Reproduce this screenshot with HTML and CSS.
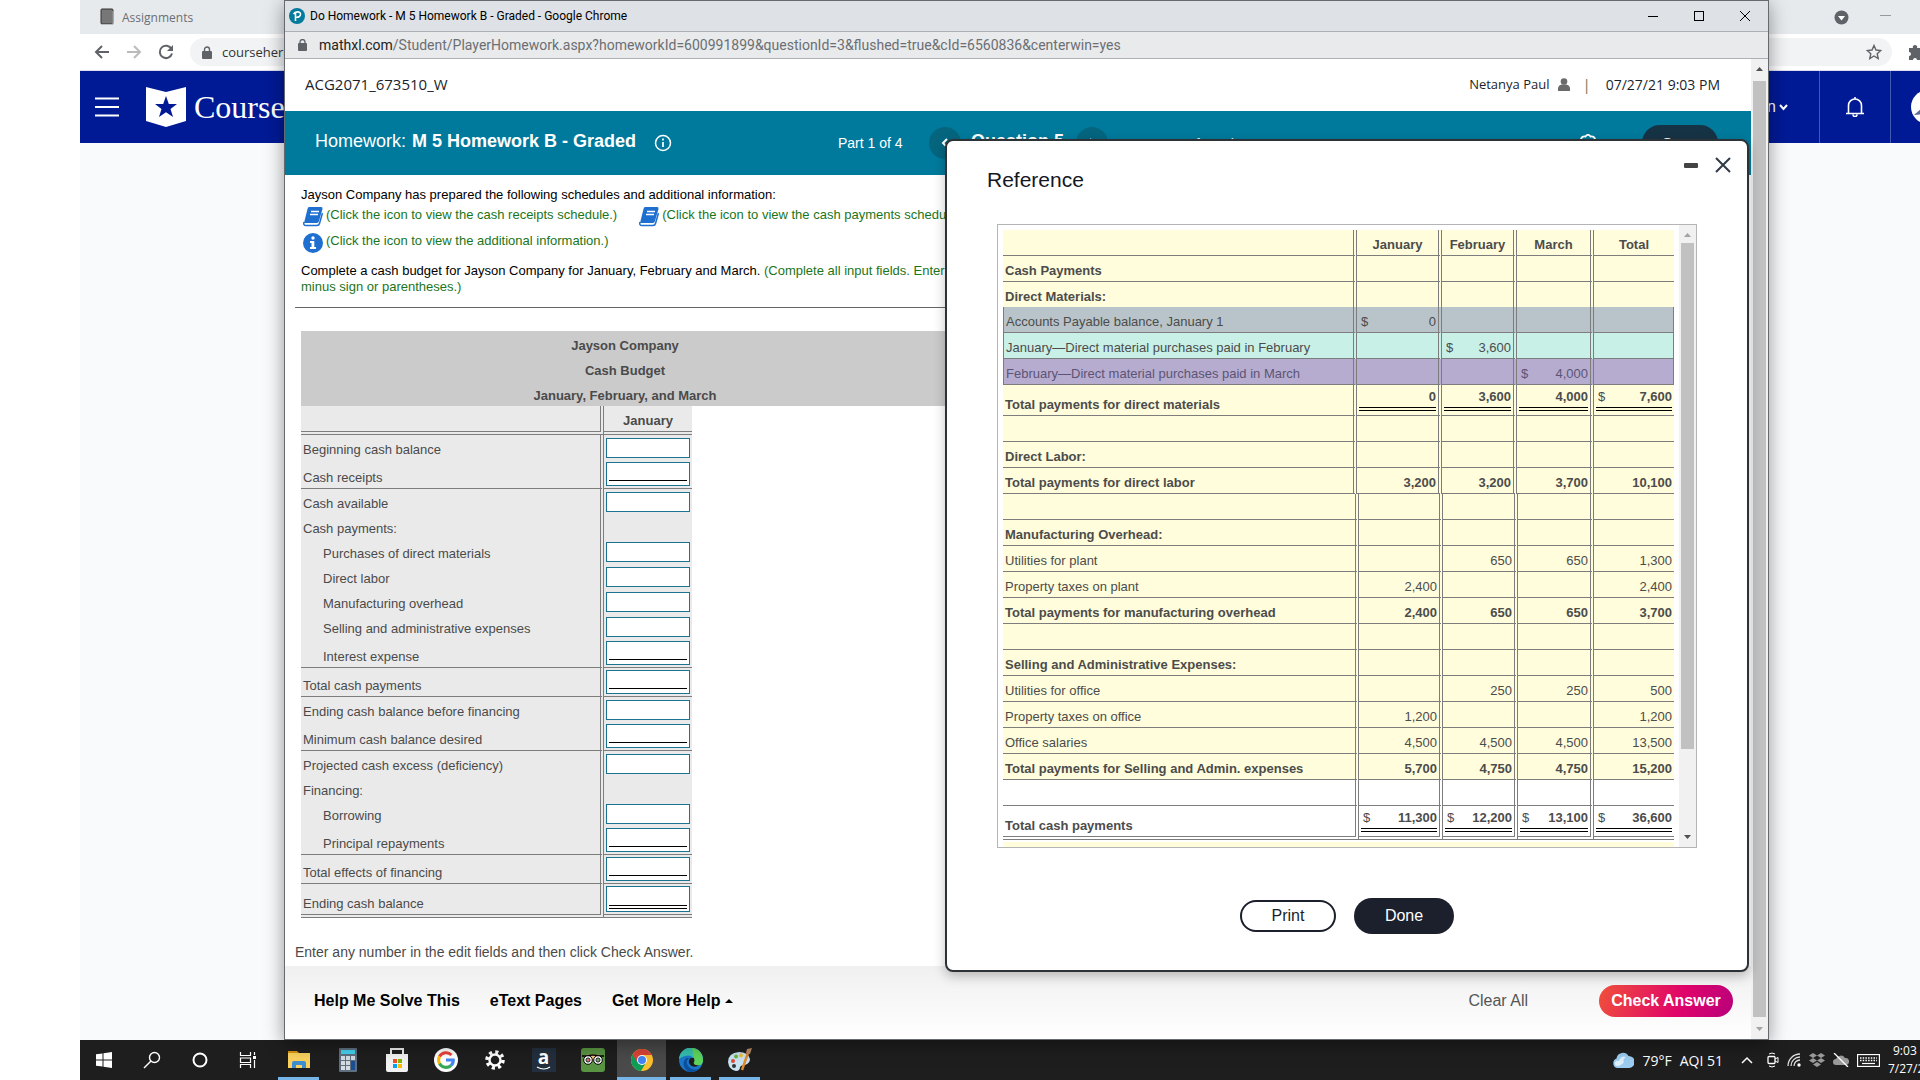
FILE: index.html
```html
<!DOCTYPE html>
<html lang="en">
<head>
  <meta charset="UTF-8">
  <meta name="viewport" content="width=device-width, initial-scale=1.0">
  <title>Do Homework - M 5 Homework B - Graded</title>
  <link rel="stylesheet" href="styles.css">
</head>
<body>

  <div class="desktop">

    <!-- Browser in the background -->
    <div class="browser">
      <div class="tab-strip">
        <svg class="tab-icon" width="14" height="18" viewBox="0 0 14 18"><rect x="1" y="1" width="12" height="15" rx="1" fill="#777" stroke="#333"/><path d="M2 16.500h11V3" stroke="#bbb" fill="none"/></svg>
        <span class="tab-title">Assignments</span>
        <svg class="tab-account" width="15" height="15" viewBox="0 0 15 15"><circle cx="7.500" cy="7.500" r="7" fill="#5f6368"/><path d="M4 6h7l-3.500 4.500z" fill="#fff"/></svg>
        <svg class="tab-minimize" width="11" height="11" viewBox="0 0 11 11"><path d="M0 3.500h11" stroke="#999"/></svg>
      </div>
      <div class="toolbar">
        <svg width="16" height="16" viewBox="0 0 16 16"><path d="M15 8H2M8 2L2 8l6 6" fill="none" stroke="#5f6368" stroke-width="2"/></svg>
        <svg width="16" height="16" viewBox="0 0 16 16"><path d="M1 8h13M8 2l6 6-6 6" fill="none" stroke="#bbb" stroke-width="2"/></svg>
        <svg width="16" height="16" viewBox="0 0 16 16"><path d="M13.500 5A6.200 6.200 0 1 0 14 9.500" fill="none" stroke="#5f6368" stroke-width="2"/><path d="M15 1v6H9z" fill="#5f6368"/></svg>
        <div class="omnibox">
          <svg width="10" height="13" viewBox="0 0 10 13"><rect y="5" width="10" height="8" rx="1" fill="#5f6368"/><path d="M2.500 5V3.500a2.500 2.500 0 0 1 5 0V5" fill="none" stroke="#5f6368" stroke-width="1.400"/></svg>
          <span>coursehero.com</span>
          <svg class="star" width="16" height="16" viewBox="0 0 16 16"><path d="M8 1.500l2 4.500 4.800.5-3.600 3.200 1 4.800L8 12l-4.200 2.500 1-4.800L1.200 6.500 6 6z" fill="none" stroke="#5f6368" stroke-width="1.400"/></svg>
        </div>
        <svg class="puzzle" width="16" height="16" viewBox="0 0 16 16"><path d="M1 4h4a2.200 2.200 0 1 1 4 0h4v4a2 2 0 1 1 0 4v4H9a2 2 0 0 0-4 0H1v-4a2 2 0 0 0 0-4z" fill="#5f6368"/></svg>
      </div>
      <div class="site-header">
        <svg class="menu" width="24" height="20" viewBox="0 0 24 20"><path d="M0 1.500h24M0 10h24M0 18.500h24" stroke="#fff" stroke-width="2"/></svg>
        <svg width="40" height="40" viewBox="0 0 40 40"><path d="M0 0l20 5L40 0v34l-20 6-20-6z" fill="#fff"/><path d="M20 9l2.800 8h8.200l-6.500 5 2.500 8-7-4.800L13 30l2.500-8L9 17h8.200z" fill="#001a96"/></svg>
        <span class="site-name">Course Hero</span>
        <div class="site-menu">
          <span>n</span>
          <svg width="9" height="7" viewBox="0 0 9 7"><path d="M1 1l3.500 4L8 1" fill="none" stroke="#fff" stroke-width="2"/></svg>
        </div>
        <div class="site-bell">
          <svg width="20" height="20" viewBox="0 0 20 20"><path d="M1 16.500h18M3.500 16V8.500a6.500 6.500 0 0 1 13 0V16M8 17.500a2 2 0 0 0 4 0M10 2V0" fill="none" stroke="#fff" stroke-width="1.600"/></svg>
        </div>
        <div class="site-user">
          <svg width="36" height="36" viewBox="0 0 36 36"><circle cx="18" cy="18" r="17" fill="#fff"/><path d="M4 26l8-7 6 6z" fill="#5a6a9a"/></svg>
        </div>
      </div>
    </div>

    <!-- Homework window -->
    <div class="window">
      <div class="title-bar">
        <svg width="16" height="16" viewBox="0 0 16 16"><circle cx="8" cy="8" r="8" fill="#047a9c"/><path d="M6.500 13V5M4.500 6.200C6 3.200 11.500 3 11.500 6.200c0 2.400-2.500 3.300-4 2.800" fill="none" stroke="#fff" stroke-width="1.600"/></svg>
        <span>Do Homework - M 5 Homework B - Graded - Google Chrome</span>
        <svg class="win-buttons" width="104" height="12" viewBox="0 0 104 12"><path d="M1 6.500h10" stroke="#000"/><rect x="47.500" y="1.500" width="9" height="9" fill="none" stroke="#000"/><path d="M93 1l10 10M103 1L93 11" stroke="#000"/></svg>
      </div>
      <div class="url-bar">
        <svg width="9" height="12" viewBox="0 0 9 12"><rect y="4" width="9" height="8" rx="1" fill="#5f6368"/><path d="M2 5V3a2.500 2.500 0 0 1 5 0v2" fill="none" stroke="#5f6368" stroke-width="1.300"/></svg>
        <span><b>mathxl.com</b>/Student/PlayerHomework.aspx?homeworkId=600991899&amp;questionId=3&amp;flushed=true&amp;cId=6560836&amp;centerwin=yes</span>
      </div>

      <div class="window-body">
        <div class="page">
          <div class="course-bar">
            <span class="course-id">ACG2071_673510_W</span>
            <span class="user-name">Netanya Paul</span>
            <svg width="12" height="13" viewBox="0 0 12 13"><circle cx="6" cy="3.500" r="3.300" fill="#6a6a6a"/><path d="M0 13V9.500Q1 7 3.500 6.500h5Q11 7 12 9.500V13z" fill="#6a6a6a"/></svg>
            <span class="bar">|</span>
            <span class="course-date">07/27/21 9:03 PM</span>
          </div>

          <div class="homework-bar">
            <h1>Homework: <b>M 5 Homework B - Graded</b>
              <svg width="18" height="18" viewBox="0 0 18 18"><circle cx="9" cy="9" r="7.500" fill="none" stroke="#fff" stroke-width="1.500"/><path d="M9 8v5M9 4.500v2" stroke="#fff" stroke-width="1.700"/></svg>
            </h1>
            <span class="part">Part 1 of 4</span>
            <button class="round" type="button" aria-label="Previous question"><svg width="8" height="12" viewBox="0 0 8 12"><path d="M6 2L2 6l4 4" fill="none" stroke="#fff" stroke-width="2"/></svg></button>
            <span class="question">Question 5</span>
            <button class="round" type="button" aria-label="Next question"><svg width="8" height="12" viewBox="0 0 8 12"><path d="M2 2l4 4-4 4" fill="none" stroke="#fff" stroke-width="2"/></svg></button>
            <span class="score">Score: 0 of 2 points</span>
            <svg class="gear" width="18" height="18" viewBox="0 0 18 18"><path d="M6.500 2.500Q9-1 11.500 2.500q3.500-.5 4.500 2.500-1 2 1 4-2 2-1 4-1 3-4.500 2.500Q9 19 6.500 15.500 3 16 2 13q1-2-1-4 2-2 1-4 1-3 4.500-2.500z" fill="none" stroke="#fff" stroke-width="1.800"/></svg>
            <button class="save" type="button">Save</button>
          </div>

          <div class="problem">
            <p>Jayson Company has prepared the following schedules and additional information:</p>
            <div class="links">
              <a href="#receipts"><svg width="20" height="20" viewBox="0 0 20 20"><path d="M6 0h12q2 0 1.500 2L16 14q-.5 2-2 2H1L4.500 2Q5 0 6 0z" fill="#1f6fd0"/><path d="M1 15q-1 3.500 2 3.500h11q2 0 2.500-2L19.500 6" fill="none" stroke="#1f6fd0" stroke-width="1.500"/><path d="M8 4.500h8M7 7.500h8" stroke="#fff" stroke-width="1.300"/></svg>(Click the icon to view the cash receipts schedule.)</a>
              <a href="#payments"><svg width="20" height="20" viewBox="0 0 20 20"><path d="M6 0h12q2 0 1.500 2L16 14q-.5 2-2 2H1L4.500 2Q5 0 6 0z" fill="#1f6fd0"/><path d="M1 15q-1 3.500 2 3.500h11q2 0 2.500-2L19.500 6" fill="none" stroke="#1f6fd0" stroke-width="1.500"/><path d="M8 4.500h8M7 7.500h8" stroke="#fff" stroke-width="1.300"/></svg>(Click the icon to view the cash payments schedule.)</a>
            </div>
            <div class="links info">
              <a href="#additional"><svg width="20" height="20" viewBox="0 0 20 20"><circle cx="10" cy="10" r="10" fill="#1f6fd0"/><circle cx="10" cy="5" r="1.700" fill="#fff"/><path d="M7 8h4.300v6H13v2H7v-2h1.500v-4H7z" fill="#fff"/></svg>(Click the icon to view the additional information.)</a>
            </div>
            <p class="task">Complete a cash budget for Jayson Company for January, February and March. <em>(Complete all input fields. Enter a<br>minus sign or parentheses.)</em></p>
          </div>

          <div class="answer">
            <table class="budget">
              <colgroup><col class="c-label"><col class="c-month"><col></colgroup>
              <thead>
                <tr class="heading"><th colspan="3">Jayson Company</th></tr>
                <tr class="heading"><th colspan="3">Cash Budget</th></tr>
                <tr class="heading"><th colspan="3">January, February, and March</th></tr>
                <tr class="months"><th></th><th>January</th></tr>
              </thead>
              <tbody>
                <tr><td><label for="b1">Beginning cash balance</label></td><td><div class="field"><input id="b1" type="text"></div></td></tr>
                <tr class="sum"><td><label for="b2">Cash receipts</label></td><td><div class="field"><input id="b2" type="text"></div></td></tr>
                <tr><td><label for="b3">Cash available</label></td><td><div class="field"><input id="b3" type="text"></div></td></tr>
                <tr><td>Cash payments:</td><td></td></tr>
                <tr class="sub"><td><label for="b4">Purchases of direct materials</label></td><td><div class="field"><input id="b4" type="text"></div></td></tr>
                <tr class="sub"><td><label for="b5">Direct labor</label></td><td><div class="field"><input id="b5" type="text"></div></td></tr>
                <tr class="sub"><td><label for="b6">Manufacturing overhead</label></td><td><div class="field"><input id="b6" type="text"></div></td></tr>
                <tr class="sub"><td><label for="b7">Selling and administrative expenses</label></td><td><div class="field"><input id="b7" type="text"></div></td></tr>
                <tr class="sub sum"><td><label for="b8">Interest expense</label></td><td><div class="field"><input id="b8" type="text"></div></td></tr>
                <tr class="sum"><td><label for="b9">Total cash payments</label></td><td><div class="field"><input id="b9" type="text"></div></td></tr>
                <tr><td><label for="b10">Ending cash balance before financing</label></td><td><div class="field"><input id="b10" type="text"></div></td></tr>
                <tr class="sum"><td><label for="b11">Minimum cash balance desired</label></td><td><div class="field"><input id="b11" type="text"></div></td></tr>
                <tr><td><label for="b12">Projected cash excess (deficiency)</label></td><td><div class="field"><input id="b12" type="text"></div></td></tr>
                <tr><td>Financing:</td><td></td></tr>
                <tr class="sub"><td><label for="b13">Borrowing</label></td><td><div class="field"><input id="b13" type="text"></div></td></tr>
                <tr class="sub sum"><td><label for="b14">Principal repayments</label></td><td><div class="field"><input id="b14" type="text"></div></td></tr>
                <tr class="sum"><td><label for="b15">Total effects of financing</label></td><td><div class="field"><input id="b15" type="text"></div></td></tr>
                <tr class="final"><td><label for="b16">Ending cash balance</label></td><td><div class="field"><input id="b16" type="text"></div></td></tr>
              </tbody>
            </table>
          </div>

          <p class="hint">Enter any number in the edit fields and then click Check Answer.</p>

          <div class="page-footer">
            <a href="#solve">Help Me Solve This</a>
            <a href="#etext">eText Pages</a>
            <a href="#help">Get More Help <svg width="8" height="5" viewBox="0 0 8 5"><path d="M0 5l4-4 4 4z"/></svg></a>
            <button class="clear" type="button">Clear All</button>
            <button class="check" type="button">Check Answer</button>
          </div>
        </div>

        <div class="scrollbar">
          <svg width="9" height="6" viewBox="0 0 9 6"><path d="M1 5l3.500-4L8 5z" fill="#505050"/></svg>
          <div class="thumb"></div>
          <svg width="9" height="6" viewBox="0 0 9 6"><path d="M1 1l3.500 4L8 1z" fill="#a3a3a3"/></svg>
        </div>
      </div>

      <!-- Reference dialog -->
      <div class="dialog" role="dialog" aria-labelledby="ref-title">
        <div class="dialog-head">
          <h2 id="ref-title">Reference</h2>
          <button class="icon-btn" type="button" aria-label="Minimize"><svg width="16" height="16" viewBox="0 0 16 16"><rect x="1" y="6" width="14" height="5" rx="1" fill="#444"/></svg></button>
          <button class="icon-btn" type="button" aria-label="Close"><svg width="16" height="16" viewBox="0 0 16 16"><path d="M1 1l14 14M15 1L1 15" stroke="#2f3a47" stroke-width="2"/></svg></button>
        </div>

        <div class="ref-box">
          <div class="ref-content">
            <table class="ref ref-top">
              <colgroup><col class="r1"><col class="r2"><col class="r3"><col class="r4"><col class="r5"></colgroup>
              <thead>
                <tr><th></th><th>January</th><th>February</th><th>March</th><th>Total</th></tr>
              </thead>
              <tbody>
                <tr class="total"><td>Cash Payments</td><td></td><td></td><td></td><td></td></tr>
                <tr class="total open"><td>Direct Materials:</td><td></td><td></td><td></td><td></td></tr>
                <tr class="mark grey"><td>Accounts Payable balance, January 1</td><td><div class="money"><i>$</i>0</div></td><td></td><td></td><td></td></tr>
                <tr class="mark mint"><td>January—Direct material purchases paid in February</td><td></td><td><div class="money"><i>$</i>3,600</div></td><td></td><td></td></tr>
                <tr class="mark violet"><td>February—Direct material purchases paid in March</td><td></td><td></td><td><div class="money"><i>$</i>4,000</div></td><td></td></tr>
                <tr class="total"><td>Total payments for direct materials</td><td><div class="money ruled">0</div></td><td><div class="money ruled">3,600</div></td><td><div class="money ruled">4,000</div></td><td><div class="money ruled"><i>$</i>7,600</div></td></tr>
                <tr><td></td><td></td><td></td><td></td><td></td></tr>
                <tr class="total"><td>Direct Labor:</td><td></td><td></td><td></td><td></td></tr>
                <tr class="total"><td>Total payments for direct labor</td><td>3,200</td><td>3,200</td><td>3,700</td><td>10,100</td></tr>
              </tbody>
            </table>
            <table class="ref ref-bottom">
              <colgroup><col class="r1"><col class="r2"><col class="r3"><col class="r4"><col class="r5"></colgroup>
              <tbody>
                <tr><td></td><td></td><td></td><td></td><td></td></tr>
                <tr class="total"><td>Manufacturing Overhead:</td><td></td><td></td><td></td><td></td></tr>
                <tr><td>Utilities for plant</td><td></td><td>650</td><td>650</td><td>1,300</td></tr>
                <tr><td>Property taxes on plant</td><td>2,400</td><td></td><td></td><td>2,400</td></tr>
                <tr class="total"><td>Total payments for manufacturing overhead</td><td>2,400</td><td>650</td><td>650</td><td>3,700</td></tr>
                <tr><td></td><td></td><td></td><td></td><td></td></tr>
                <tr class="total"><td>Selling and Administrative Expenses:</td><td></td><td></td><td></td><td></td></tr>
                <tr><td>Utilities for office</td><td></td><td>250</td><td>250</td><td>500</td></tr>
                <tr><td>Property taxes on office</td><td>1,200</td><td></td><td></td><td>1,200</td></tr>
                <tr><td>Office salaries</td><td>4,500</td><td>4,500</td><td>4,500</td><td>13,500</td></tr>
                <tr class="total"><td>Total payments for Selling and Admin. expenses</td><td>5,700</td><td>4,750</td><td>4,750</td><td>15,200</td></tr>
                <tr class="plain"><td></td><td></td><td></td><td></td><td></td></tr>
                <tr class="plain total grand"><td>Total cash payments</td><td><div class="money ruled"><i>$</i>11,300</div></td><td><div class="money ruled"><i>$</i>12,200</div></td><td><div class="money ruled"><i>$</i>13,100</div></td><td><div class="money ruled"><i>$</i>36,600</div></td></tr>
              </tbody>
            </table>
            <div class="ref-next"></div>
          </div>
          <div class="scrollbar">
            <svg width="9" height="6" viewBox="0 0 9 6"><path d="M1 5l3.500-4L8 5z" fill="#a3a3a3"/></svg>
            <div class="thumb"></div>
            <svg width="9" height="6" viewBox="0 0 9 6"><path d="M1 1l3.500 4L8 1z" fill="#505050"/></svg>
          </div>
        </div>

        <div class="dialog-buttons">
          <button class="print" type="button">Print</button>
          <button class="done" type="button">Done</button>
        </div>
      </div>
    </div>
  </div>

  <!-- Taskbar -->
  <div class="taskbar">
    <div class="task-item"><svg width="16" height="16" viewBox="0 0 16 16"><path d="M0 2.300l6.500-.9v6.100H0zM7.500 1.200L16 0v7.500H7.500zM0 8.500h6.500v6.100L0 13.700zM7.500 8.500H16V16l-8.500-1.200z" fill="#fff"/></svg></div>
    <div class="task-item"><svg width="18" height="18" viewBox="0 0 18 18"><circle cx="11.500" cy="6.500" r="5" fill="none" stroke="#fff" stroke-width="1.400"/><path d="M8 10l-7 7" stroke="#fff" stroke-width="1.500"/></svg></div>
    <div class="task-item"><svg width="18" height="18" viewBox="0 0 18 18"><circle cx="9" cy="9" r="6.500" fill="none" stroke="#fff" stroke-width="2"/></svg></div>
    <div class="task-item"><svg width="18" height="18" viewBox="0 0 18 18"><path d="M1.500 1v3.500h10V1M1.500 17v-3.500h10V17M1.500 7h10v4.500h-10zM15.500 1v3M15.500 9v8" fill="none" stroke="#fff" stroke-width="1.200"/><path d="M14 5h3v3h-3z" fill="#fff"/></svg></div>
    <div class="task-apps">
      <div class="task-item app open"><svg width="24" height="24" viewBox="0 0 24 24"><path d="M1 3h9l2 2v3H1z" fill="#d9940f"/><path d="M1 5h22v15H1z" fill="#fbd25f"/><path d="M5 20v-5q0-2 2-2h10q2 0 2 2v5h-4v-3H9v3z" fill="#3f8fd0"/></svg></div>
      <div class="task-item app"><svg width="18" height="24" viewBox="0 0 18 24"><rect width="18" height="24" rx="1" fill="#5d6f80"/><rect x="2" y="2" width="14" height="4" fill="#43d3f0"/><path d="M2 8h4v4H2zM7 8h4v4H7zM12 8h4v4h-4zM2 13h4v4H2zM7 13h4v4H7zM2 18h4v4H2zM7 18h4v4H7z" fill="#d5dce2"/><path d="M12 13h4v9h-4z" fill="#1b4f94"/></svg></div>
      <div class="task-item app"><svg width="24" height="24" viewBox="0 0 24 24"><path d="M6 6V1h12v5" fill="none" stroke="#eee" stroke-width="2"/><path d="M1 6h22v16q0 2-2 2H3q-2 0-2-2z" fill="#f2f2f2"/><path d="M8 11h4v4H8z" fill="#f25022"/><path d="M13 11h4v4h-4z" fill="#7fba00"/><path d="M8 16h4v4H8z" fill="#00a4ef"/><path d="M13 16h4v4h-4z" fill="#ffb900"/></svg></div>
      <div class="task-item app"><svg width="24" height="24" viewBox="0 0 24 24"><circle cx="12" cy="12" r="12" fill="#fff"/><g fill="none" stroke-width="3"><path d="M17.500 7A7.500 7.500 0 0 0 5.500 8.500" stroke="#ea4335"/><path d="M5.500 8.500a7.500 7.500 0 0 0 0 7" stroke="#fbbc05"/><path d="M5.500 15.500a7.500 7.500 0 0 0 11.500 2" stroke="#34a853"/><path d="M17 17.500a7 7 0 0 0 2.300-5.500H12" stroke="#4285f4"/></g></svg></div>
      <div class="task-item app"><svg width="20" height="20" viewBox="0 0 20 20"><circle cx="10" cy="10" r="8" fill="none" stroke="#fff" stroke-width="3.500" stroke-dasharray="3.140 3.140"/><circle cx="10" cy="10" r="5.500" fill="none" stroke="#fff" stroke-width="2.400"/></svg></div>
      <div class="task-item app"><div class="amazon">a<svg width="16" height="5" viewBox="0 0 16 5"><path d="M1 1q7 4 13 0" fill="none" stroke="#fff" stroke-width="1.200"/></svg></div></div>
      <div class="task-item app"><svg width="24" height="24" viewBox="0 0 24 24"><rect width="24" height="24" rx="3" fill="#589442"/><path d="M3 8q9-4 18 0l-9 5z" fill="#f5c878"/><path d="M1 8h5q6-2 12 0h5" fill="none" stroke="#000" stroke-width="1.500"/><circle cx="7" cy="12" r="4.300" fill="#fff" stroke="#000"/><circle cx="17" cy="12" r="4.300" fill="#fff" stroke="#000"/><circle cx="7" cy="12" r="2" fill="none" stroke="#000"/><circle cx="17" cy="12" r="2" fill="none" stroke="#000"/><circle cx="7" cy="12" r="1" fill="#e33"/><circle cx="17" cy="12" r="1" fill="#393"/></svg></div>
      <div class="task-item app active"><svg width="22" height="22" viewBox="0 0 22 22"><circle cx="11" cy="11" r="11" fill="#fbc02d"/><path d="M1.500 5.500A11 11 0 0 0 10 22l5-8.500L11 11z" fill="#0f9d58"/><path d="M11 6h9.800a11 11 0 0 0-.3-.5A11 11 0 0 0 1.500 5.500L6.600 13.500z" fill="#db4437"/><circle cx="11" cy="11" r="5" fill="#fff"/><circle cx="11" cy="11" r="4" fill="#4285f4"/></svg></div>
      <div class="task-item app open"><svg width="24" height="24" viewBox="0 0 24 24"><circle cx="12" cy="12" r="12" fill="#1b78c8"/><path d="M0 11A12 12 0 0 1 24 12q0 5-5 5.500-5 0-4-3 1-6-5-7-6 0-10 3.500z" fill="#35c1b0"/><path d="M13 0a12 12 0 0 1 11 12q0 5-5 5.500-5 0-4-3 1-2 0-4z" fill="#5fd45a"/><path d="M10 10q-4 3-1 8 4 5 11 3A12 12 0 0 1 10 23.800Q3 20 5 13q2-4 5-3z" fill="#0c4f9e"/><path d="M15 10q1 3-.5 5 1 3 6 2-4 3-8 1-5-4-1-8z" fill="#1e1e1e"/></svg></div>
      <div class="task-item app open"><svg width="24" height="24" viewBox="0 0 24 24"><path d="M11 4Q0 5 0 14q1 8 8 9 4 0 4-4 1-2 5-2 5-2 5-6-2-7-11-7z" fill="#c9e3f3"/><circle cx="5" cy="13" r="2" fill="#e04a3a"/><circle cx="8" cy="8.500" r="2" fill="#6cb33f"/><circle cx="13" cy="7.500" r="2" fill="#f0c030"/><circle cx="6" cy="18" r="2" fill="#333"/><path d="M20 5l-6 17" stroke="#e08a2c" stroke-width="2.500"/><path d="M18 5l1-4 5-1-2 6z" fill="#b98a62"/></svg></div>
    </div>

    <div class="tray">
      <svg width="22" height="16" viewBox="0 0 22 16"><path d="M5 16a5 5 0 0 1-.5-9.500A6.500 6.500 0 0 1 16.500 4 6 6 0 0 1 17 16z" fill="#9ccdf0"/><path d="M5 14q-3-1-2-4 2-2 4-1 2-6 7-4-4 3-2 5-3 4-7 4z" fill="#def0fc"/></svg>
      <span class="temp">79°F</span>
      <span class="aqi">AQI 51</span>
      <svg class="chevron" width="12" height="8" viewBox="0 0 12 8"><path d="M1 7l5-5 5 5" fill="none" stroke="#fff" stroke-width="1.500"/></svg>
      <svg width="12" height="16" viewBox="0 0 12 16"><rect x="1" y="4.500" width="7" height="7" rx="1" fill="none" stroke="#fff" stroke-width="1.300"/><path d="M8 7l3-1.500v5L8 9M2 2q3-2 6 0M2 14q3 2 6 0" fill="none" stroke="#fff"/></svg>
      <svg width="14" height="14" viewBox="0 0 14 14"><path d="M1 13A12 12 0 0 1 13 1M4 13a9 9 0 0 1 9-9M7 13a6 6 0 0 1 6-6" fill="none" stroke="#ddd" stroke-width="1.300"/><circle cx="12" cy="12" r="1.700" fill="#fff"/></svg>
      <svg width="16" height="14" viewBox="0 0 16 14"><path d="M4 0l4 2.500L4 5 0 2.500zM12 0l4 2.500L12 5 8 2.500zM4 5l4 2.500L4 10 0 7.500zM12 5l4 2.500-4 2.500-4-2.500zM8 9l4 2.500L8 14l-4-2.500z" fill="#999"/></svg>
      <svg width="16" height="14" viewBox="0 0 16 14"><path d="M3 12a3 3 0 0 1 0-6 5 5 0 0 1 9-1 3.500 3.500 0 0 1 1 7z" fill="#999"/><path d="M1 0l14 14" stroke="#fff" stroke-width="1.300"/></svg>
      <svg width="23" height="13" viewBox="0 0 23 13"><rect x=".5" y=".5" width="22" height="12" fill="none" stroke="#fff" stroke-width="1.300"/><path d="M3 4h17M3 6.500h17" stroke="#fff" stroke-width="1.400" stroke-dasharray="1.500 1.200"/><path d="M5 9.500h13" stroke="#fff" stroke-width="1.200"/></svg>
      <div class="clock"><span>9:03 PM</span><span>7/27/2021</span></div>
    </div>
  </div>

</body>
</html>
```
FILE: styles.css
```css
* {
  box-sizing: border-box;
}

body {
  margin: 0;
  height: 100vh;
  padding-left: 80px;
  display: flex;
  flex-direction: column;
  overflow: hidden;
  background-color: #fff;
  font-family: "Liberation Sans", Arial, sans-serif;
  font-size: 13px;
  color: #000;
}

p, h1, h2 {
  margin: 0;
  font-weight: normal;
}

svg {
  display: block;
  flex-shrink: 0;
}

button {
  font-family: inherit;
  font-size: 16px;
  border: none;
  padding: 0;
  cursor: pointer;
}

a {
  text-decoration: none;
}

.desktop {
  position: relative;
  flex: 1;
  min-height: 0;
  background-color: #f8fafc;
}

/* Background browser */
.tab-strip {
  height: 34px;
  padding: 0 29px 0 20px;
  display: flex;
  align-items: center;
  background-color: #e7eaed;
  font-family: "Open Sans", sans-serif;
  font-size: 12px;
  color: #6b6f73;
}

.tab-title {
  margin-left: 8px;
}

.tab-account {
  margin-left: auto;
}

.tab-minimize {
  margin-left: 31px;
}

.toolbar {
  height: 37px;
  display: flex;
  align-items: center;
  gap: 16px;
  padding-left: 14px;
  background-color: #fff;
  border-bottom: 1px solid #dde;
}

.omnibox {
  flex: 1;
  height: 28px;
  padding: 0 10px 0 12px;
  display: flex;
  align-items: center;
  gap: 10px;
  border-radius: 14px;
  background-color: #f1f3f4;
  font-family: "Open Sans", sans-serif;
  font-size: 13px;
  color: #333;
}

.star {
  margin-left: auto;
}

.puzzle {
  margin-right: -4px;
}

.site-header {
  height: 72px;
  display: flex;
  align-items: center;
  padding-left: 15px;
  background-color: #001a96;
  color: #fff;
}

.menu {
  margin-right: 27px;
}

.site-name {
  margin-left: 8px;
  font-family: "Liberation Serif", serif;
  font-size: 32px;
}

.site-menu {
  margin-left: auto;
  width: 52px;
  display: flex;
  align-items: center;
  gap: 3px;
  font-size: 16px;
}

.site-bell {
  width: 72px;
  height: 72px;
  display: flex;
  align-items: center;
  justify-content: center;
  border: 1px solid #4557b5;
  border-width: 0 1px;
}

.site-user {
  width: 29px;
  padding-left: 19px;
  overflow: hidden;
}

/* Homework window */
.window {
  position: absolute;
  top: 0;
  left: 204px;
  right: 151px;
  bottom: 0;
  display: flex;
  flex-direction: column;
  border: 1px solid #66696e;
  background-color: #fff;
  box-shadow: 0 4px 18px rgba(0, 0, 0, 0.4);
}

.title-bar {
  height: 31px;
  padding: 0 17px 0 4px;
  display: flex;
  align-items: center;
  gap: 5px;
  background-color: #dee1e6;
  border-bottom: 1px solid #adb0b4;
  font-family: Roboto, sans-serif;
  font-size: 12px;
}

.win-buttons {
  margin-left: auto;
}

.url-bar {
  height: 27px;
  padding: 0 13px;
  display: flex;
  align-items: center;
  gap: 12px;
  background-color: #e9eaec;
  border-bottom: 1px solid #adb0b4;
  font-family: Roboto, sans-serif;
  font-size: 14px;
  color: #6b6f73;
}

.url-bar b {
  font-weight: normal;
  color: #222;
}

.window-body {
  flex: 1;
  min-height: 0;
  display: flex;
}

.page {
  flex: 1;
  min-width: 0;
  display: flex;
  flex-direction: column;
}

.scrollbar {
  width: 17px;
  padding: 7px 2px;
  display: flex;
  flex-direction: column;
  align-items: center;
  gap: 9px;
  background-color: #f1f1f1;
}

.thumb {
  flex: 1;
  width: 13px;
  background-color: #c1c1c1;
}

.course-bar {
  height: 52px;
  padding: 0 31px 2px 20px;
  display: flex;
  align-items: center;
  font-family: "Open Sans", sans-serif;
  font-size: 15px;
  color: #1c1f2b;
}

.user-name {
  margin-left: auto;
  margin-right: 9px;
  font-size: 13px;
}

.bar {
  margin: 0 15px 0 12px;
  color: #777755;
}

.course-date {
  font-size: 14px;
}

.homework-bar {
  height: 64px;
  padding: 0 33px 0 30px;
  display: flex;
  align-items: center;
  flex-shrink: 0;
  background-color: #007a9c;
  color: #fff;
  font-size: 14px;
  white-space: nowrap;
}

.homework-bar h1 {
  width: 523px;
  padding-bottom: 4px;
  display: flex;
  align-items: center;
  gap: 6px;
  font-size: 18px;
}

.homework-bar h1 svg {
  margin: 4px 0 0 12px;
}

.part {
  width: 91px;
}

.round {
  width: 32px;
  height: 32px;
  display: flex;
  align-items: center;
  justify-content: center;
  border-radius: 50%;
  background-color: #05657f;
}

.question {
  margin: 0 12px 0 10px;
  padding-bottom: 4px;
  font-size: 18px;
  font-weight: bold;
}

.score {
  margin-left: 24px;
  padding-top: 2px;
}

.gear {
  margin-left: auto;
}

.save {
  width: 76px;
  height: 36px;
  margin-left: 45px;
  padding-top: 4px;
  border-radius: 18px;
  background-color: #163345;
  color: #fff;
}

.problem {
  margin: 0 10px;
  padding: 12px 6px;
  line-height: 16px;
  border-bottom: 1px solid #666;
  white-space: nowrap;
}

.links {
  height: 20px;
  margin-top: 4px;
  display: flex;
  gap: 20px;
}

.links.info {
  margin-top: 6px;
}

.links a {
  display: flex;
  gap: 3px;
  padding-left: 2px;
  color: #1b751b;
}

.task {
  margin-top: 10px;
}

.task em {
  font-style: normal;
  color: #1b751b;
}

.answer {
  padding: 23px 16px 0;
}

/* Budget table */
.budget {
  width: 648px;
  table-layout: fixed;
  border-spacing: 0;
  color: #4a4a4a;
  line-height: 21px;
}

.c-label {
  width: 303px;
}

.c-month {
  width: 88px;
}

.budget th, .budget td {
  padding: 0 2px;
  vertical-align: bottom;
}

.budget .heading th {
  height: 25px;
  background-color: #cbcbcb;
}

.budget .months th {
  height: 29px;
  border-bottom: 4px double #7d7d7d;
  background-color: #eaeaea;
}

.budget tbody td {
  height: 25px;
  background-color: #eaeaea;
}

.budget td:first-child, .budget .months th:first-child {
  border-right: 4px double #7d7d7d;
}

.budget .sub td:first-child {
  padding-left: 22px;
}

.budget .sum td {
  height: 29px;
  border-bottom: 1px solid #7d7d7d;
}

.budget .final td {
  height: 34px;
  border-bottom: 4px double #7d7d7d;
}

.budget td:last-child {
  padding-bottom: 2px;
}

.field {
  height: 20px;
  padding: 2px;
  display: flex;
  background-color: #fff;
  border: 1px solid #1a7390;
}

.field input {
  width: 100%;
  padding: 0;
  border: none;
  background-color: transparent;
  font: inherit;
  text-align: right;
}

.sum .field {
  height: 24px;
  padding-bottom: 4px;
}

.sum .field input {
  border-bottom: 1px solid #000;
}

.final .field {
  height: 26px;
}

.final .field input {
  border-bottom: 4px double #000;
}

.hint {
  padding: 24px 10px 0;
  font-size: 14px;
  line-height: 20px;
  color: #4a4a4a;
}

.page-footer {
  flex: 1;
  margin-top: 4px;
  padding: 0 18px 4px 29px;
  display: flex;
  align-items: center;
  gap: 30px;
  background: linear-gradient(#f0f0f0, #fff);
  font-size: 16px;
  font-weight: bold;
}

.page-footer a {
  display: flex;
  align-items: center;
  gap: 5px;
  color: #000;
}

.clear {
  margin-left: auto;
  background: none;
  color: #555;
}

.check {
  width: 134px;
  height: 32px;
  margin-left: 41px;
  border-radius: 16px;
  background: linear-gradient(110deg, #f0503a, #e0046a 60%, #b8007c);
  color: #fff;
  font-weight: bold;
}

/* Reference dialog */
.dialog {
  position: absolute;
  top: 138px;
  left: 660px;
  right: 19px;
  padding-bottom: 36px;
  border: 2px solid #2d3236;
  border-radius: 8px;
  background-color: #fff;
  box-shadow: 0 4px 12px rgba(0, 0, 0, 0.25);
}

.dialog-head {
  height: 83px;
  padding: 16px 16px 0 40px;
  display: flex;
  align-items: flex-start;
  gap: 16px;
}

.dialog-head h2 {
  flex: 1;
  padding-top: 11px;
  font-size: 21px;
  line-height: 24px;
  color: #14171f;
}

.icon-btn {
  background: none;
}

.ref-box {
  width: 700px;
  height: 624px;
  margin-left: 50px;
  display: flex;
  border: 1px solid #b5b5b5;
}

.ref-content {
  flex: 1;
  padding: 5px 5px 0;
  overflow: hidden;
}

.ref-box .thumb {
  flex: 0 1 506px;
  margin-top: -4px;
}

.ref-box .scrollbar svg:last-child {
  margin-top: auto;
}

.ref {
  width: 671px;
  table-layout: fixed;
  border-spacing: 0;
  background-color: #fffddb;
  color: #4c4c4c;
  line-height: 21px;
}

.r1 { width: 354px; }
.r2 { width: 85px; }
.r3 { width: 75px; }
.r4 { width: 77px; }
.r5 { width: 80px; }

.ref-bottom .r1 { width: 356px; }
.ref-bottom .r2 { width: 84px; }
.ref-bottom .r4 { width: 76px; }

.ref th, .ref td {
  height: 26px;
  padding: 0 2px;
  vertical-align: bottom;
  text-align: right;
  border-bottom: 1px solid #7d7d7d;
  border-right: 4px double #7d7d7d;
}

.ref th {
  text-align: center;
}

.ref td:first-child {
  text-align: left;
}

.ref th:last-child, .ref td:last-child {
  border-right: none;
}

.ref .total td {
  font-weight: bold;
}

.ref .open td {
  height: 25px;
  border-bottom: none;
}

.ref .mark td:first-child {
  border-left: 1px solid #7d7d7d;
}

.ref .mark td:last-child {
  border-right: 1px solid #7d7d7d;
}

.grey {
  background-color: #b8c4c9;
}

.mint {
  background-color: #c8f0e6;
}

.violet {
  background-color: #b6acd0;
  color: #5c5474;
}

.plain {
  background-color: #fff;
}

.money {
  display: flex;
  justify-content: flex-end;
}

.money i {
  margin-right: auto;
  padding-left: 2px;
  font-style: normal;
  font-weight: normal;
}

.ruled {
  margin: 1px 0 4px;
  border-bottom: 4px double #000;
}

.ref .grand td {
  border-bottom: 4px double #7d7d7d;
}

.ref-next {
  height: 10px;
  margin-top: 2px;
  background-color: #fffddb;
}

.dialog-buttons {
  margin-top: 50px;
  display: flex;
  align-items: center;
  justify-content: center;
  gap: 18px;
}

.print {
  width: 96px;
  height: 32px;
  border: 2px solid #1a1f2b;
  border-radius: 16px;
  background-color: #fff;
  color: #1a1f2b;
}

.done {
  width: 100px;
  height: 36px;
  border-radius: 18px;
  background-color: #1c202c;
  color: #fff;
}

/* Taskbar */
.taskbar {
  height: 40px;
  display: flex;
  overflow: hidden;
  background-color: #1e1e1e;
  color: #fff;
  font-family: "Open Sans", sans-serif;
}

.task-apps {
  margin-left: 2px;
  display: flex;
}

.task-item {
  width: 48px;
  display: flex;
  align-items: center;
  justify-content: center;
  flex-shrink: 0;
}

.task-item.app {
  width: 41px;
  margin: 0 4px;
}

.task-item.open {
  border-bottom: 3px solid #76b5e8;
  padding-top: 3px;
}

.task-item.active {
  width: 49px;
  margin: 0;
  padding-top: 3px;
  border-bottom: 3px solid #76b5e8;
  background-color: #4a4a4a;
}

.amazon {
  width: 24px;
  height: 24px;
  display: flex;
  flex-direction: column;
  align-items: center;
  background-color: #232f3e;
  font-weight: bold;
  font-size: 19px;
  line-height: 18px;
}

.tray {
  margin-left: auto;
  display: flex;
  align-items: center;
  gap: 8px;
  flex-shrink: 0;
  font-size: 14px;
  white-space: nowrap;
}

.chevron {
  margin: 0 6px 0 10px;
}

.clock {
  width: 32px;
  display: flex;
  flex-direction: column;
  align-items: flex-start;
  overflow: hidden;
  font-size: 12px;
  line-height: 18px;
}

.clock span:first-child {
  padding-left: 5px;
}
```
